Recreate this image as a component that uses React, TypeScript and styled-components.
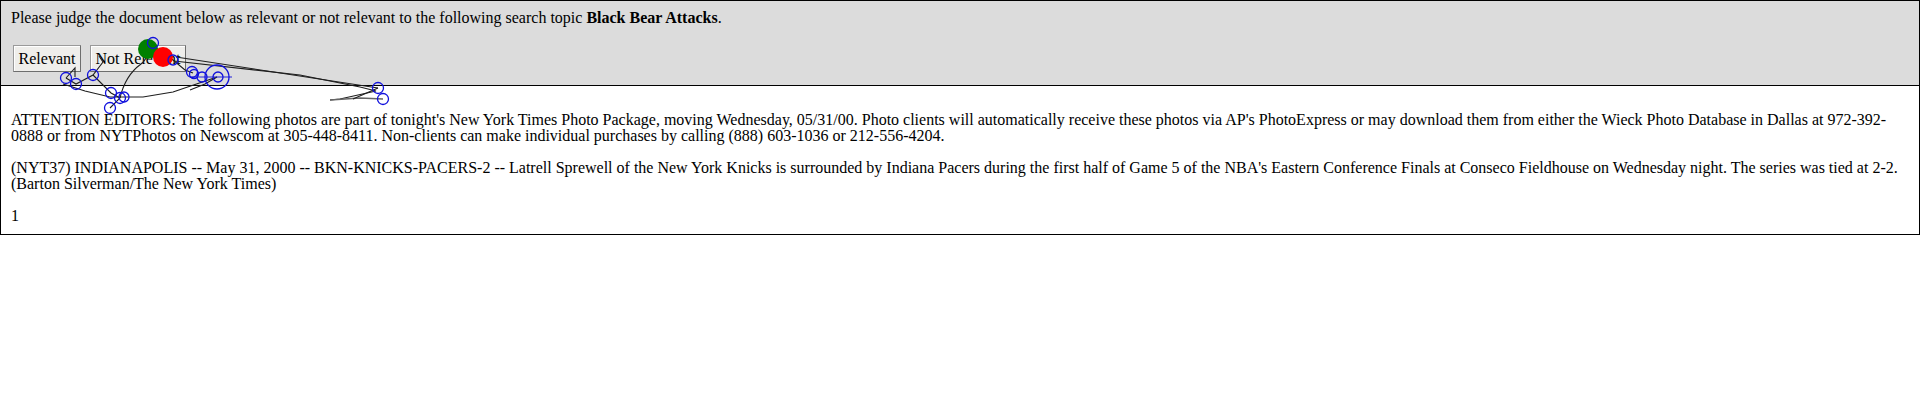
import styled, { createGlobalStyle } from 'styled-components';

const GlobalStyle = createGlobalStyle`
    html, body {
        margin: 0;
        padding: 0;
        background: #ffffff;
    }
    body {
        font-family: 'Liberation Serif', 'Times New Roman', serif;
        font-size: 16px;
        color: #000000;
    }
`;

const Page = styled.div`
    position: relative;
    width: 1920px;
    height: 411px;
`;

const Frame = styled.div`
    border: 1px solid #000000;
`;

const Header = styled.div`
    background: #dcdcdc;
    border-bottom: 1px solid #000000;
    padding: 9px 10px 13px;
    line-height: 16px;
`;

const ButtonRow = styled.div`
    display: flex;
    gap: 9px;
    margin-top: 19px;
    padding-left: 2px;
`;

const JudgeButton = styled.button<{ width: number }>`
    width: ${(props) => props.width}px;
    height: 27px;
    padding: 0;
    font-family: 'Liberation Serif', 'Times New Roman', serif;
    font-size: 16px;
    color: #000000;
    background: #efeeeb;
    border: 1px solid #9a9a9a;
    border-right-color: #6e6e6e;
    border-bottom-color: #6e6e6e;
    box-shadow: inset 1px 1px 0 #ffffff;
    cursor: pointer;
`;

const Content = styled.div`
    display: flex;
    flex-direction: column;
    gap: 16px;
    padding: 26px 10px 10px;
    line-height: 16px;
`;

const Paragraph = styled.p`
    margin: 0;
`;

const Trace = styled.svg`
    position: absolute;
    top: 0;
    left: 0;
    pointer-events: none;
`;

const hits: [number, number, number][] = [
    [66, 78, 5.5],
    [76, 84, 5.5],
    [93, 75, 5.5],
    [111, 93, 5.5],
    [120, 98, 5.5],
    [124, 97, 5],
    [110, 108, 5.5],
    [153, 43, 5.5],
    [173, 60, 5],
    [192, 72, 5.5],
    [194, 74, 4.5],
    [202, 77, 5],
    [217, 77, 12],
    [218, 77, 5],
    [378, 88, 5.5],
    [383, 99, 5.5],
];

function MouseTrace() {
    return (
        <Trace width={1920} height={411} viewBox="0 0 1920 411">
            <g fill="none" stroke="#1e1e1e" strokeWidth={1.1}>
                <polyline points="66,78 75,68 75,77" />
                <polyline points="63,84 85,91 110,97 143,97 173,92 217,77" />
                <polyline points="66,78 76,84 93,75 103,62 99,56" />
                <polyline points="93,75 111,93 120,98 110,108" />
                <path d="M120 98 C123 85 130 72 141 64 C146 60 148 55 148 50" />
                <polyline points="153,43 158,50 173,60 185,70 193,73" />
                <polyline points="176,57 378,88" />
                <polyline points="174,61 300,75 360,87 376,91 340,99 330,100" />
                <polyline points="330,100 360,98 383,99" stroke="#666666" strokeWidth={1.5} />
                <polyline points="353,99 378,88" />
                <polyline points="217,77 205,84 190,90" />
            </g>
            <polyline points="190,77 232,77" fill="none" stroke="#2222dd" strokeWidth={1} />
            <circle cx={148} cy={49} r={10} fill="#008000" />
            <circle cx={163} cy={57} r={10} fill="#ff0000" />
            <g fill="none" stroke="#1010dd" strokeWidth={1.3}>
                {hits.map(([cx, cy, r], i) => (
                    <circle key={i} cx={cx} cy={cy} r={r} />
                ))}
            </g>
        </Trace>
    );
}

export default function App() {
    return (
        <>
            <GlobalStyle />
            <Page>
                <Frame>
                    <Header>
                        Please judge the document below as relevant or not relevant to the
                        following search topic <b>Black Bear Attacks</b>.
                        <ButtonRow>
                            <JudgeButton width={68}>Relevant</JudgeButton>
                            <JudgeButton width={96}>Not Relevant</JudgeButton>
                        </ButtonRow>
                    </Header>
                    <Content>
                        <Paragraph>
                            ATTENTION EDITORS: The following photos are part of tonight's New York
                            Times Photo Package, moving Wednesday, 05/31/00. Photo clients will
                            automatically receive these photos via AP's PhotoExpress or may download
                            them from either the Wieck Photo Database in Dallas at 972-392-0888 or
                            from NYTPhotos on Newscom at 305-448-8411. Non-clients can make
                            individual purchases by calling (888) 603-1036 or 212-556-4204.
                        </Paragraph>
                        <Paragraph>
                            (NYT37) INDIANAPOLIS -- May 31, 2000 -- BKN-KNICKS-PACERS-2 -- Latrell
                            Sprewell of the New York Knicks is surrounded by Indiana Pacers during
                            the first half of Game 5 of the NBA's Eastern Conference Finals at
                            Conseco Fieldhouse on Wednesday night. The series was tied at 2-2.
                            (Barton Silverman/The New York Times)
                        </Paragraph>
                        <Paragraph>1</Paragraph>
                    </Content>
                </Frame>
                <MouseTrace />
            </Page>
        </>
    );
}
